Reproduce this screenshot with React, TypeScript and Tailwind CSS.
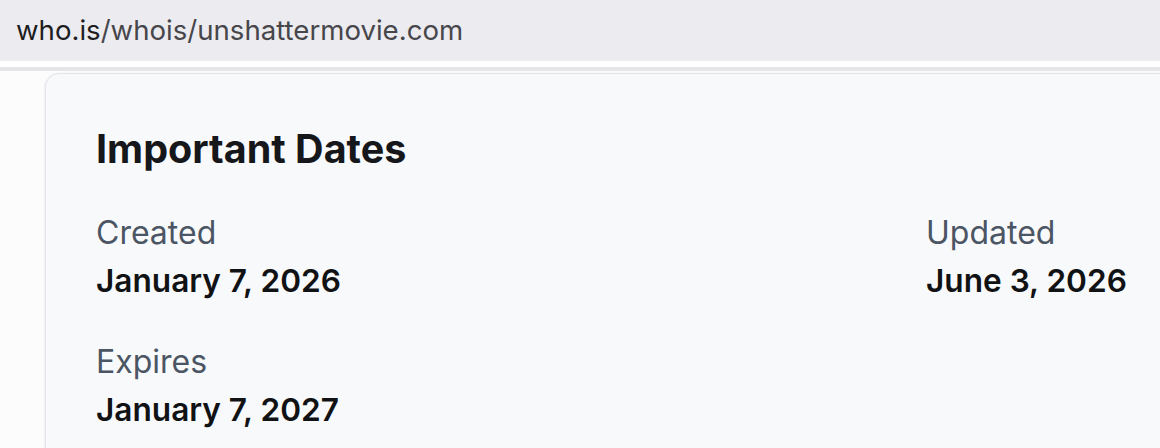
const dates = [
  { label: 'Created', value: 'January 7, 2026' },
  { label: 'Updated', value: 'June 3, 2026' },
  { label: 'Expires', value: 'January 7, 2027' },
];

export default function App() {
  return (
    <div
      className="w-[1160px] h-[448px] overflow-hidden bg-white"
      style={{ fontFamily: 'Inter, "Noto Sans", sans-serif' }}
    >
      <div className="h-[61px] bg-[#ecebf0] flex items-center pl-4 text-[27.6px]">
        <span className="text-[#1d1d1f]">who.is</span>
        <span className="text-[#46464b]">/whois/unshattermovie.com</span>
      </div>
      <div className="h-[6px] bg-white" />
      <div className="h-[4px] bg-[#e4e4e9]" />
      <div className="pl-[45px] pt-[2px] bg-[#fcfcfd]">
        <div className="w-[1400px] h-[400px] rounded-tl-[14px] border border-[#e3e5e9] bg-[#f8f9fb] pl-[50px] pt-[51px] shadow-sm">
          <h2 className="text-[39.5px] leading-[48px] font-bold text-[#16171a]">Important Dates</h2>
          <div className="mt-[40px] grid grid-cols-[830px_1fr] gap-y-[41px]">
            {dates.map((d) => (
              <div key={d.label} className="flex flex-col">
                <span className="text-[32px] leading-[40px] text-[#4b5563]">{d.label}</span>
                <span className="mt-[8px] text-[31.6px] leading-[40px] font-semibold text-[#111214]">{d.value}</span>
              </div>
            ))}
          </div>
        </div>
      </div>
    </div>
  );
}
